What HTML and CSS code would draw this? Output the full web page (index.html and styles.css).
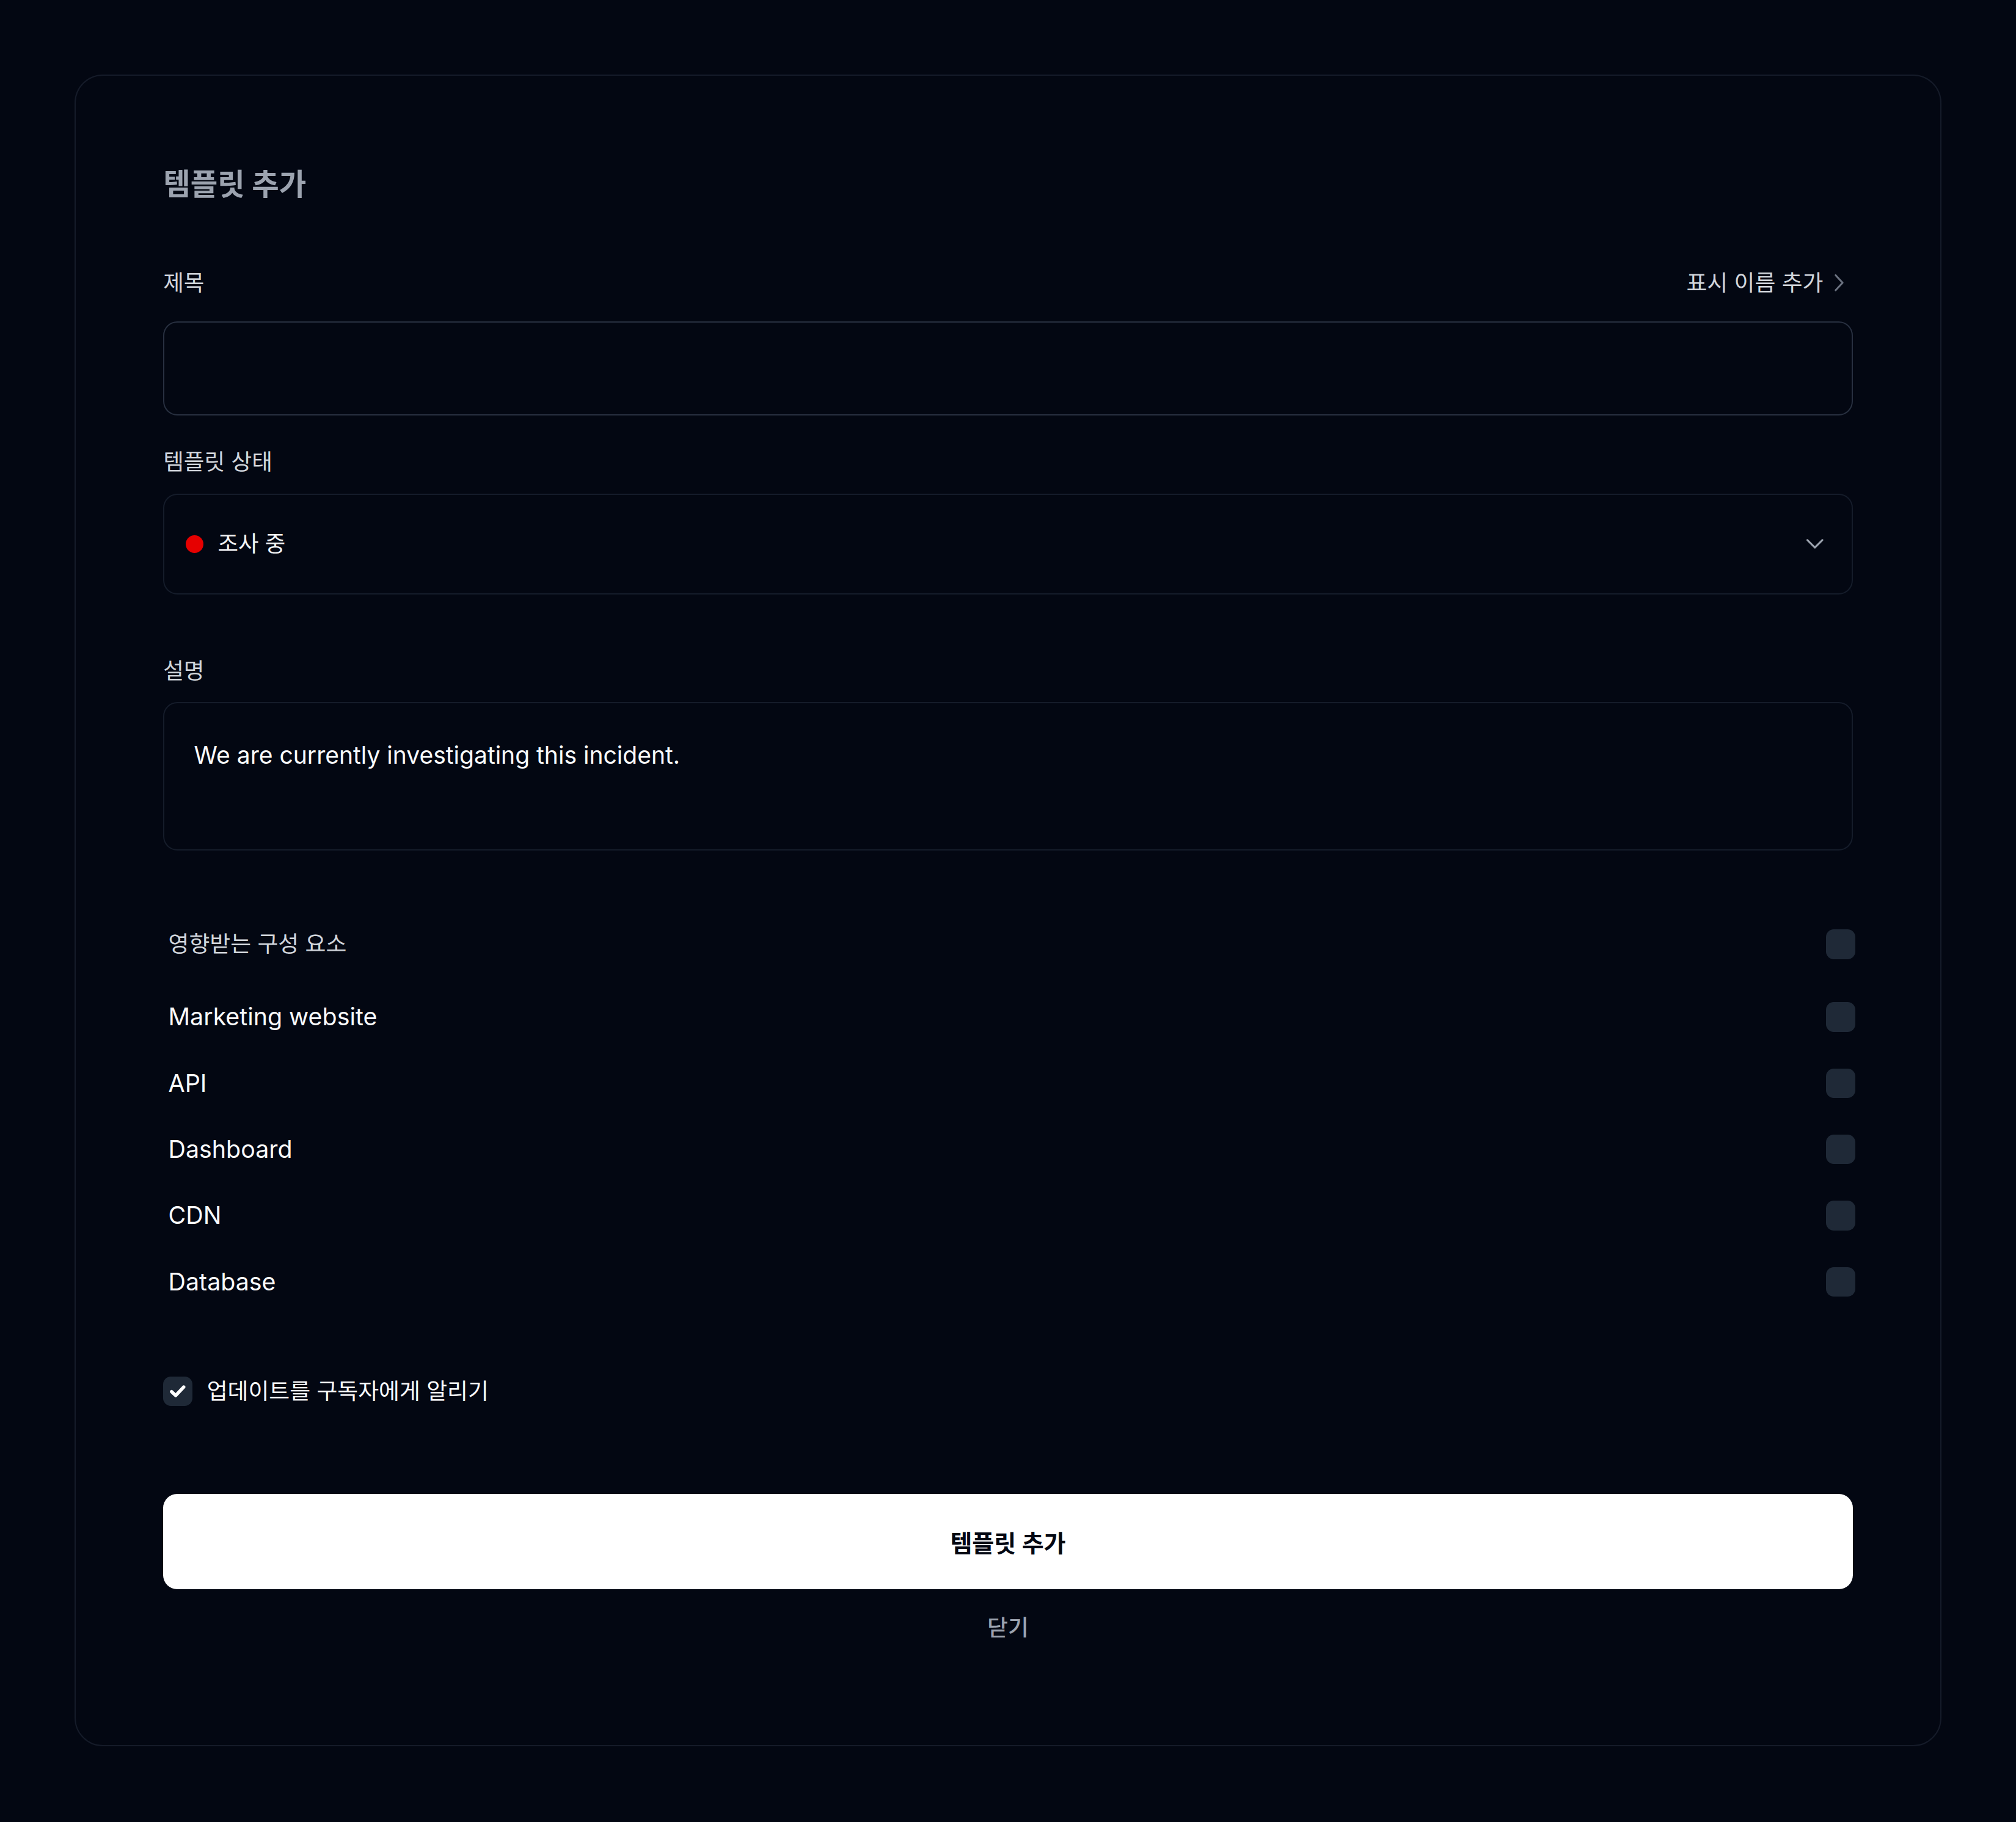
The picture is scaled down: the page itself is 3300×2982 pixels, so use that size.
FILE: index.html
```html
<!DOCTYPE html>
<html lang="ko">
<head>
<meta charset="utf-8">
<title>템플릿 추가</title>
<link rel="stylesheet" href="styles.css">
</head>
<body>
<div class="page">
  <div class="card">
    <h2 class="title">템플릿 추가</h2>

    <div class="label-row">
      <span class="label">제목</span>
      <button class="link" type="button">표시 이름 추가
        <svg class="chev-right" width="10" height="16" viewBox="0 0 10 16" aria-hidden="true"><path d="M2 1.5 L8 8 L2 14.5" fill="none" stroke="currentColor" stroke-width="1.6" stroke-linecap="round" stroke-linejoin="round"/></svg>
      </button>
    </div>
    <div class="input"></div>

    <div class="label label-block">템플릿 상태</div>
    <div class="select">
      <span class="dot"></span>
      <span class="select-text">조사 중</span>
      <svg class="chev-down" width="16" height="10" viewBox="0 0 16 10" aria-hidden="true"><path d="M1.5 1.5 L8 8 L14.5 1.5" fill="none" stroke="currentColor" stroke-width="1.6" stroke-linecap="round" stroke-linejoin="round"/></svg>
    </div>

    <div class="label label-block label-desc">설명</div>
    <div class="textarea">We are currently investigating this incident.</div>

    <div class="components">
      <div class="comp-row comp-head"><span class="comp-head-text">영향받는 구성 요소</span><span class="cb"></span></div>
      <div class="comp-row"><span>Marketing website</span><span class="cb"></span></div>
      <div class="comp-row"><span>API</span><span class="cb"></span></div>
      <div class="comp-row"><span>Dashboard</span><span class="cb"></span></div>
      <div class="comp-row"><span>CDN</span><span class="cb"></span></div>
      <div class="comp-row"><span>Database</span><span class="cb"></span></div>
    </div>

    <div class="notify">
      <span class="cb cb-checked"><svg width="16" height="16" viewBox="0 0 16 16" aria-hidden="true"><path d="M3.3 8.4 L6.5 11.4 L12.7 4.8" fill="none" stroke="#ffffff" stroke-width="2.6" stroke-linecap="round" stroke-linejoin="round"/></svg></span>
      <span class="notify-text">업데이트를 구독자에게 알리기</span>
    </div>

    <button class="primary" type="button">템플릿 추가</button>
    <button class="close" type="button">닫기</button>
  </div>
</div>
</body>
</html>
```

FILE: styles.css
```css
html {
  zoom: 2.1046;
  background: #030712;
}
* { box-sizing: border-box; }
body {
  margin: 0;
  background: #030712;
  font-family: Inter, "Noto Sans CJK KR", "Noto Sans", sans-serif;
  color: #f3f4f6;
}
.page {
  padding: 58px 58px 59px;
}
.card {
  border: 1px solid #151b29;
  border-radius: 22px;
  padding: 71px 68px 79px;
  display: flex;
  flex-direction: column;
}
.title {
  margin: 0 0 50px;
  font-size: 23px;
  line-height: 28px;
  font-weight: 700;
  color: #9ca3af;
}
.label-row {
  display: flex;
  justify-content: space-between;
  align-items: center;
  height: 24px;
  margin-bottom: 18px;
}
.label {
  font-size: 17.4px;
  line-height: 24px;
  color: #d1d5db;
}
.link {
  display: flex;
  align-items: center;
  gap: 8px;
  padding: 0 6px 0 0;
  margin: 0;
  border: 0;
  background: none;
  font: inherit;
  font-size: 17.5px;
  line-height: 24px;
  color: #d1d5db;
}
.chev-right { color: #6b7280; width: 9px; height: 15px; }
.input {
  height: 73px;
  border: 1px solid #283040;
  border-radius: 11px;
  margin-bottom: 24.5px;
}
.label-block { margin-bottom: 12.5px; }
.label-desc { margin-bottom: 12px; }
.select {
  height: 78.5px;
  border: 1px solid #151c2a;
  border-radius: 11px;
  display: flex;
  align-items: center;
  padding: 0 21px 0 16.5px;
  margin-bottom: 47.5px;
}
.dot {
  width: 14px;
  height: 14px;
  border-radius: 50%;
  background: #e60000;
  margin-right: 11px;
  flex: none;
}
.select-text {
  font-size: 17.3px;
  line-height: 24px;
  color: #f3f4f6;
}
.chev-down {
  margin-left: auto;
  width: 15px;
  height: 9px;
  color: #9ca3af;
}
.textarea {
  height: 115.5px;
  border: 1px solid #151c2a;
  border-radius: 11px;
  padding: 27.5px 23px;
  font-size: 18.55px;
  line-height: 26px;
  color: #f9fafb;
  margin-bottom: 61px;
}
.components {
  display: flex;
  flex-direction: column;
  gap: 27.5px;
  padding-left: 4px;
  margin-right: -2px;
  margin-bottom: 61px;
}
.comp-row {
  display: flex;
  justify-content: space-between;
  align-items: center;
  height: 24px;
  font-size: 18.7px;
  line-height: 24px;
  color: #f9fafb;
}
.comp-head { margin-bottom: 5px; }
.comp-head-text { font-size: 17.5px; color: #d1d5db; }
.cb {
  width: 23px;
  height: 23px;
  border-radius: 6px;
  background: #1f2937;
  flex: none;
  display: flex;
  align-items: center;
  justify-content: center;
}
.notify {
  display: flex;
  align-items: center;
  height: 24px;
  gap: 11.5px;
  margin-bottom: 68px;
}
.cb-checked { width: 22.5px; height: 22.5px; }
.notify-text {
  font-size: 17.5px;
  line-height: 24px;
  color: #f9fafb;
}
.primary {
  height: 74px;
  border: 0;
  border-radius: 11px;
  background: #ffffff;
  color: #030712;
  font: inherit;
  font-size: 18.6px;
  font-weight: 700;
  margin: 0 0 18px;
  padding: 0;
}
.close {
  border: 0;
  background: none;
  padding: 0;
  margin: 0;
  font: inherit;
  font-size: 17.5px;
  line-height: 24px;
  font-weight: 500;
  color: #9ca3af;
  align-self: center;
}
```
